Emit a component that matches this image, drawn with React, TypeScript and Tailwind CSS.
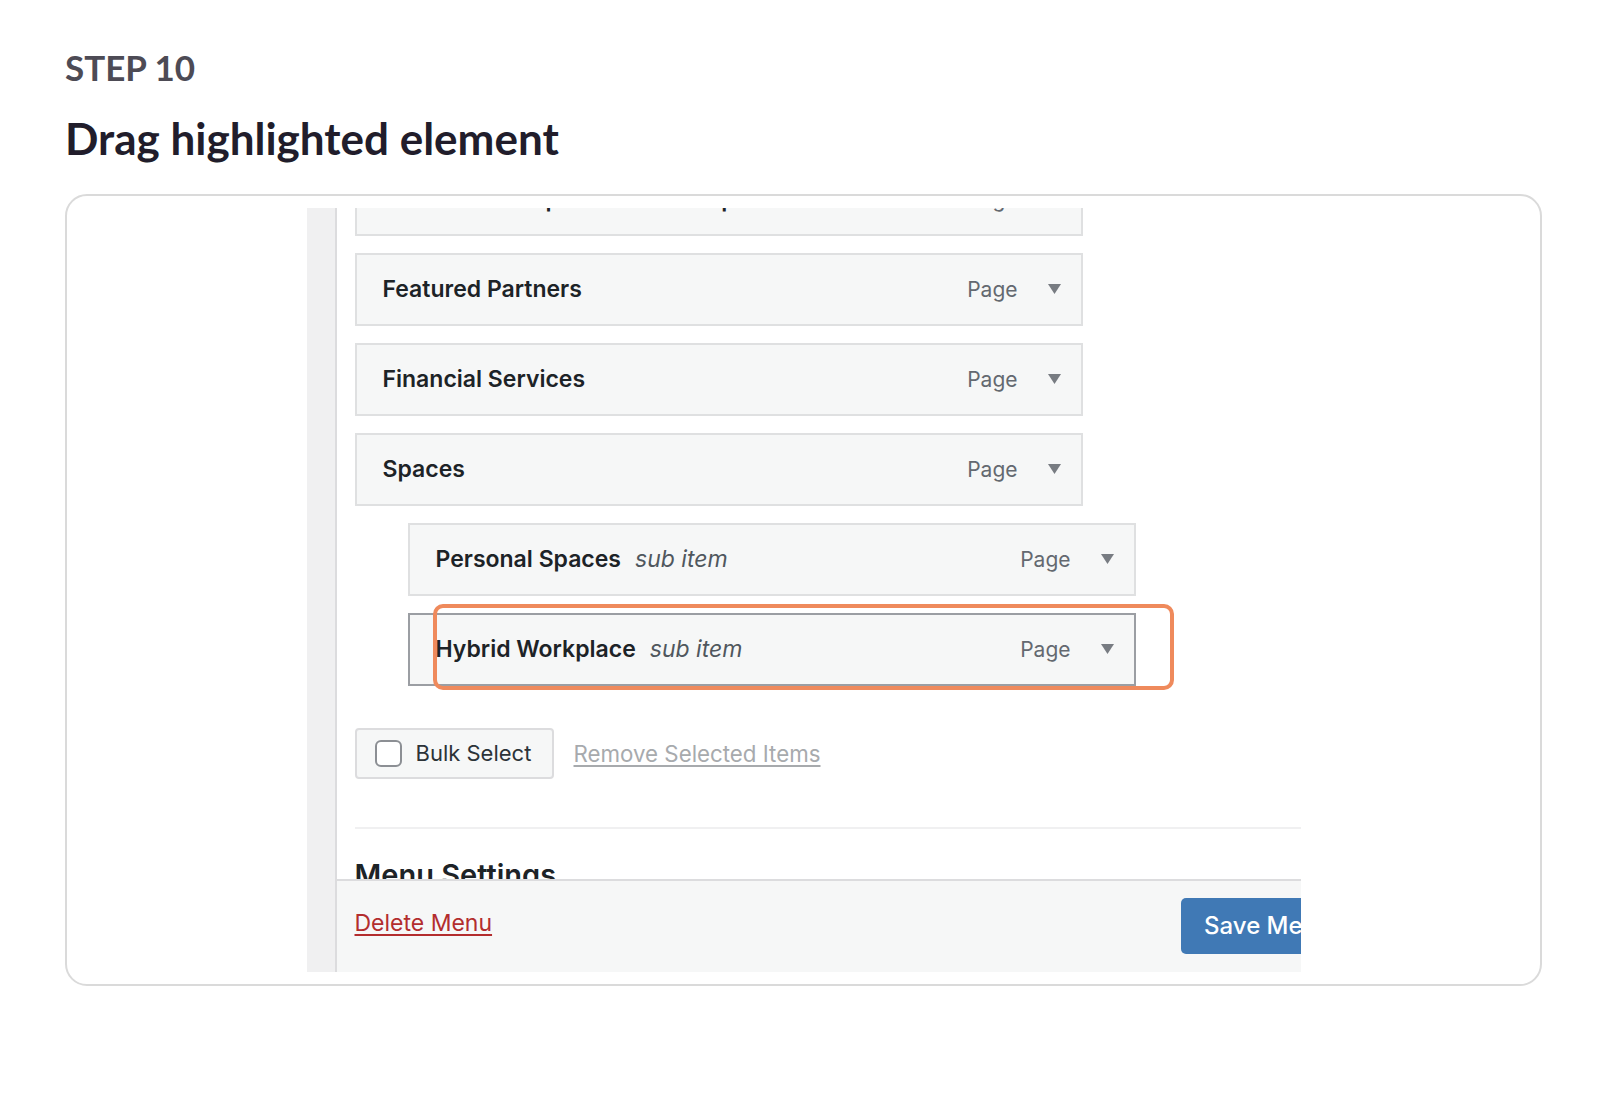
import React from "react";

interface MenuRowProps {
    title: string;
    sub?: boolean;
    dragging?: boolean;
}

const Caret = () => (
    <svg className="ml-[30px] shrink-0" width="13" height="10" viewBox="0 0 13 10">
        <polygon points="0,0 13,0 6.5,10" fill="#787c82" />
    </svg>
);

const MenuRow = ({ title, sub, dragging }: MenuRowProps) => {
    return (
        <div
            className={`flex h-[73px] w-[728px] shrink-0 items-center border-2 bg-[#f6f7f7] pl-[26px] pr-[20px] ${
                dragging ? "border-[#9b9ea3]" : "border-[#dfe0e1]"
            }`}
        >
            <span className="whitespace-nowrap text-[23px] font-semibold text-[#1d2327]">{title}</span>
            {sub && <span className="ml-[14px] whitespace-nowrap text-[23px] italic text-[#50575e]">sub item</span>}
            <span className="ml-auto text-[21px] text-[#646970]">Page</span>
            <Caret />
        </div>
    );
};

const App = () => {
    return (
        <div className="min-h-screen bg-white pl-[65px] pt-[46px] font-['Lato',sans-serif]">
            <p className="text-[35px] font-bold leading-[1.2] text-[#4d4b55]">STEP 10</p>
            <h1 className="mt-[24px] text-[44px] font-bold leading-[1.2] text-[#211d2b]">Drag highlighted element</h1>

            {/* screenshot card */}
            <div className="mt-[29px] w-[1477px] rounded-[22px] border-2 border-[#dadada] bg-white py-[12px]">
                <div className="mx-auto flex h-[764px] w-[994px] overflow-hidden font-['Inter',sans-serif]">
                    <div className="w-[28px] shrink-0 bg-[#f0f0f1]" />
                    <div className="w-[2px] shrink-0 bg-[#dcdcde]" />
                    <div className="flex min-w-0 flex-1 flex-col">
                        <div className="flex-1 overflow-hidden pl-[18px]">
                            <div className="-mt-[45px] flex flex-col gap-[17px]">
                                <MenuRow title="Flexible Workspace Partnerships" />
                                <MenuRow title="Featured Partners" />
                                <MenuRow title="Financial Services" />
                                <MenuRow title="Spaces" />
                                <div className="ml-[53px]">
                                    <MenuRow title="Personal Spaces" sub />
                                </div>
                                <div className="relative ml-[53px]">
                                    <MenuRow title="Hybrid Workplace" sub dragging />
                                    <div className="absolute left-[25px] top-[-9px] h-[86px] w-[741px] rounded-[10px] border-4 border-[#ef8a5c]" />
                                </div>
                            </div>

                            <div className="mt-[42px] flex items-center">
                                <label className="flex h-[51px] w-[199px] items-center rounded-[4px] border-2 border-[#dcdcde] bg-[#f6f7f7] pl-[18px]">
                                    <span className="h-[27px] w-[27px] rounded-[6px] border-2 border-[#8c8f94] bg-white" />
                                    <span className="ml-[14px] text-[22px] text-[#2c3338]">Bulk Select</span>
                                </label>
                                <a className="ml-[20px] text-[22.3px] text-[#a7aaad] underline underline-offset-[3px]">Remove Selected Items</a>
                            </div>

                            <div className="mt-[48px] h-[2px] bg-[#f0f0f1]" />
                            <h2 className="mt-[28px] text-[29px] font-semibold leading-[1.21] text-[#1d2327]">Menu Settings</h2>
                        </div>

                        <div className="flex h-[93px] shrink-0 items-start border-t-2 border-[#dcdcde] bg-[#f6f7f7] px-[18px] pt-[17px]">
                            <a className="mt-[8px] text-[23px] text-[#b32d2e] underline underline-offset-[3px]">Delete Menu</a>
                            <button className="-mr-[72px] ml-auto h-[56px] shrink-0 rounded-[5px] bg-[#4079b5] px-[23px] text-[24px] font-medium text-white">
                                Save Menu
                            </button>
                        </div>
                    </div>
                </div>
            </div>
        </div>
    );
};

export default App;
